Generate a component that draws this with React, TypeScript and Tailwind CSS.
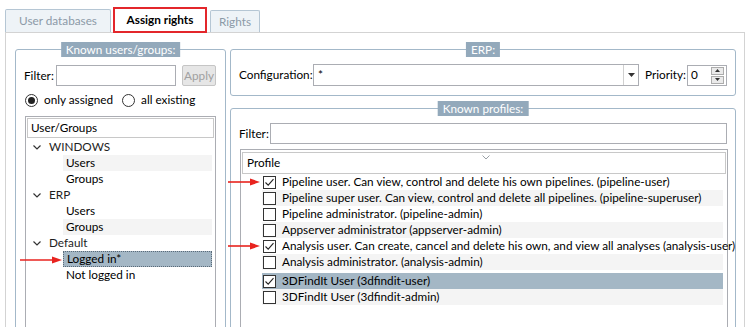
import React from "react";

const treeRows = [
  { label: "WINDOWS", parent: true },
  { label: "Users" },
  { label: "Groups" },
  { label: "ERP", parent: true },
  { label: "Users" },
  { label: "Groups" },
  { label: "Default", parent: true },
  { label: "Logged in*", selected: true },
  { label: "Not logged in" },
];

const profiles = [
  { label: "Pipeline user. Can view, control and delete his own pipelines. (pipeline-user)", checked: true },
  { label: "Pipeline super user. Can view, control and delete all pipelines. (pipeline-superuser)" },
  { label: "Pipeline administrator. (pipeline-admin)" },
  { label: "Appserver administrator (appserver-admin)" },
  { label: "Analysis user. Can create, cancel and delete his own, and view all analyses (analysis-user)", checked: true },
  { label: "Analysis administrator. (analysis-admin)" },
  { label: "3DFindIt User (3dfindit-user)", checked: true, selected: true, gap: true },
  { label: "3DFindIt User (3dfindit-admin)" },
];

function Chevron() {
  return (
    <svg width="8" height="5" viewBox="0 0 8 5" className="shrink-0">
      <path d="M0.5 0.5 L4 4 L7.5 0.5" fill="none" stroke="#333" strokeWidth="1.2" />
    </svg>
  );
}

function Check({ checked }: { checked?: boolean }) {
  return (
    <span className="w-[13px] h-[13px] border border-[#333] bg-white flex items-center justify-center shrink-0">
      {checked && (
        <svg width="11" height="11" viewBox="0 0 11 11">
          <path d="M1.5 5.5 L4.2 8.2 L9.5 2.2" fill="none" stroke="#222" strokeWidth="1.1" />
        </svg>
      )}
    </span>
  );
}

function Radio({ on }: { on?: boolean }) {
  return (
    <span className="w-[13px] h-[13px] rounded-full border border-[#333] bg-white flex items-center justify-center shrink-0">
      {on && <span className="w-[7px] h-[7px] rounded-full bg-[#222]" />}
    </span>
  );
}

function Legend({ children }: { children: React.ReactNode }) {
  return (
    <div className="absolute left-1/2 -translate-x-1/2 top-[-8px] h-[15px] px-[5px] bg-[#93a9bb] text-white leading-[15px] whitespace-nowrap">
      {children}
    </div>
  );
}

function RedArrow({ x, y, w }: { x: number; y: number; w: number }) {
  return (
    <svg
      className="absolute"
      style={{ left: x, top: y - 5 }}
      width={w}
      height="10"
      viewBox={`0 0 ${w} 10`}
    >
      <line x1="0" y1="5" x2={w - 8} y2="5" stroke="#e8231f" strokeWidth="1.6" />
      <path d={`M${w - 10} 1.5 L${w} 5 L${w - 10} 8.5 Z`} fill="#e8231f" />
    </svg>
  );
}

export default function App() {
  return (
    <div className="relative w-[750px] h-[327px] overflow-hidden bg-white text-[11.75px] text-black font-['Lato','Noto_Sans',sans-serif]">
      {/* TABS */}
      <div className="flex items-end h-[32px] pl-[5px]">
        <div className="h-[23px] w-[106px] border border-b-0 border-[#b5c6d4] bg-[#eef3f7] text-[#8c9aa7] flex items-center justify-center rounded-t-[2px]">
          User databases
        </div>
        <div className="relative z-10 h-[26px] w-[94px] ml-[2px] mb-[-1px] border-2 border-[#e3262b] bg-white font-bold flex items-center justify-center">
          Assign rights
        </div>
        <div className="h-[22px] w-[50px] ml-[3px] border border-b-0 border-[#b5c6d4] bg-[#eef3f7] text-[#8c9aa7] flex items-center justify-center rounded-t-[2px]">
          Rights
        </div>
      </div>

      {/* PANE */}
      <div className="mx-[5px] h-[300px] border border-[#d3d3d3] flex gap-[4px] pl-[9px] pr-[8px] pt-[16px]">
        {/* LEFT */}
        <div className="relative w-[211px] h-[300px] shrink-0 border border-[#a3b8c9] rounded-[3px] pt-[15px] pl-[8px]">
          <Legend>Known users/groups:</Legend>

          <div className="flex items-center h-[21px]">
            <span className="w-[32px]">Filter:</span>
            <div className="w-[120px] h-[21px] border border-[#abadb3] bg-white" />
            <div className="ml-[6px] w-[34px] h-[21px] border border-[#c5c5c5] bg-[#e6e6e6] text-[#a0a0a0] rounded-[2px] flex items-center justify-center">
              Apply
            </div>
          </div>

          <div className="flex items-center h-[16px] mt-[6px] ml-[1px]">
            <Radio on />
            <span className="ml-[6px]">only assigned</span>
            <span className="ml-[9px]">
              <Radio />
            </span>
            <span className="ml-[6px]">all existing</span>
          </div>

          <div className="mt-[8px] ml-[1px] w-[191px] h-[250px] border border-[#abadb3] p-[1px] bg-white">
            <div className="h-[20px] border border-[#c8c8c8] pl-[3px] flex items-center">User/Groups</div>
            <div className="mt-[1px]">
              {treeRows.map((r, i) =>
                r.parent ? (
                  <div key={i} className="h-[16px] flex items-center pl-[6px]">
                    <Chevron />
                    <span className="ml-[8px] text-[#1e1e1e]">{r.label}</span>
                  </div>
                ) : (
                  <div key={i} className="h-[16px] flex pl-[36px] pr-[2px]">
                    <span
                      className={
                        "flex-1 pl-[3px] flex items-center " +
                        (r.selected ? "bg-[#a4b7c5] border border-dotted border-[#5a6a78] pl-[2px]" : i % 2 ? "bg-[#f4f4f4]" : "")
                      }
                    >
                      {r.label}
                    </span>
                  </div>
                )
              )}
            </div>
          </div>
        </div>

        {/* RIGHT */}
        <div className="flex flex-col gap-[12px] w-[506px] shrink-0">
          <div className="relative h-[47px] shrink-0 border border-[#a3b8c9] rounded-[3px] pt-[14px] pl-[8px]">
            <Legend>ERP:</Legend>
            <div className="flex items-center">
              <span className="w-[74px]">Configuration:</span>
              <div className="w-[326px] h-[22px] border border-[#abadb3] flex">
                <span className="flex-1 pl-[4px] flex items-center">*</span>
                <span className="w-[15px] border-l border-[#d0d0d0] flex items-center justify-center">
                  <svg width="7" height="4" viewBox="0 0 7 4">
                    <path d="M0 0 L7 0 L3.5 4 Z" fill="#333" />
                  </svg>
                </span>
              </div>
              <span className="ml-[6px] w-[42px]">Priority:</span>
              <div className="w-[40px] h-[21px] border border-[#abadb3] flex">
                <span className="flex-1 pl-[3px] flex items-center">0</span>
                <div className="w-[13px] mr-[2px] py-[1px] flex flex-col gap-[1px]">
                  <div className="flex-1 border border-[#acacac] bg-[#eaeaea] flex items-center justify-center">
                    <svg width="5" height="3" viewBox="0 0 5 3"><path d="M0 3 L5 3 L2.5 0 Z" fill="#333" /></svg>
                  </div>
                  <div className="flex-1 border border-[#acacac] bg-[#eaeaea] flex items-center justify-center">
                    <svg width="5" height="3" viewBox="0 0 5 3"><path d="M0 0 L5 0 L2.5 3 Z" fill="#333" /></svg>
                  </div>
                </div>
              </div>
            </div>
          </div>

          <div className="relative h-[240px] shrink-0 border border-[#a3b8c9] rounded-[3px] pt-[14px] pl-[8px]">
            <Legend>Known profiles:</Legend>
            <div className="flex items-center h-[21px]">
              <span className="w-[31px]">Filter:</span>
              <div className="w-[457px] h-[21px] border border-[#abadb3] bg-white" />
            </div>
            <div className="mt-[5px] ml-[1px] w-[488px] h-[200px] border border-[#abadb3] px-[1px] pt-[2px] bg-white">
              <div className="relative h-[22px] border border-[#c8c8c8] pl-[4px] flex items-center">
                Profile
                <svg className="absolute left-[239px] top-[2px]" width="8" height="5" viewBox="0 0 8 5">
                  <path d="M0.5 0.5 L4 4 L7.5 0.5" fill="none" stroke="#9aa0a6" strokeWidth="1" />
                </svg>
              </div>
              {profiles.map((p, i) => (
                <div key={i} className={"h-[16px] flex pl-[20px] pr-[3px] " + (p.gap ? "mt-[3px]" : "")}>
                  <div
                    className={
                      "flex-1 flex items-center pl-[1px] whitespace-nowrap " +
                      (p.selected ? "bg-[#a4b7c5]" : i % 2 ? "bg-[#f4f4f4]" : "")
                    }
                  >
                    <Check checked={p.checked} />
                    <span className="ml-[6px]">{p.label}</span>
                  </div>
                </div>
              ))}
            </div>
          </div>
        </div>
      </div>

      {/* ANNOTATION ARROWS */}
      <RedArrow x={228} y={182} w={32} />
      <RedArrow x={228} y={246} w={32} />
      <RedArrow x={20} y={260} w={42} />
    </div>
  );
}
